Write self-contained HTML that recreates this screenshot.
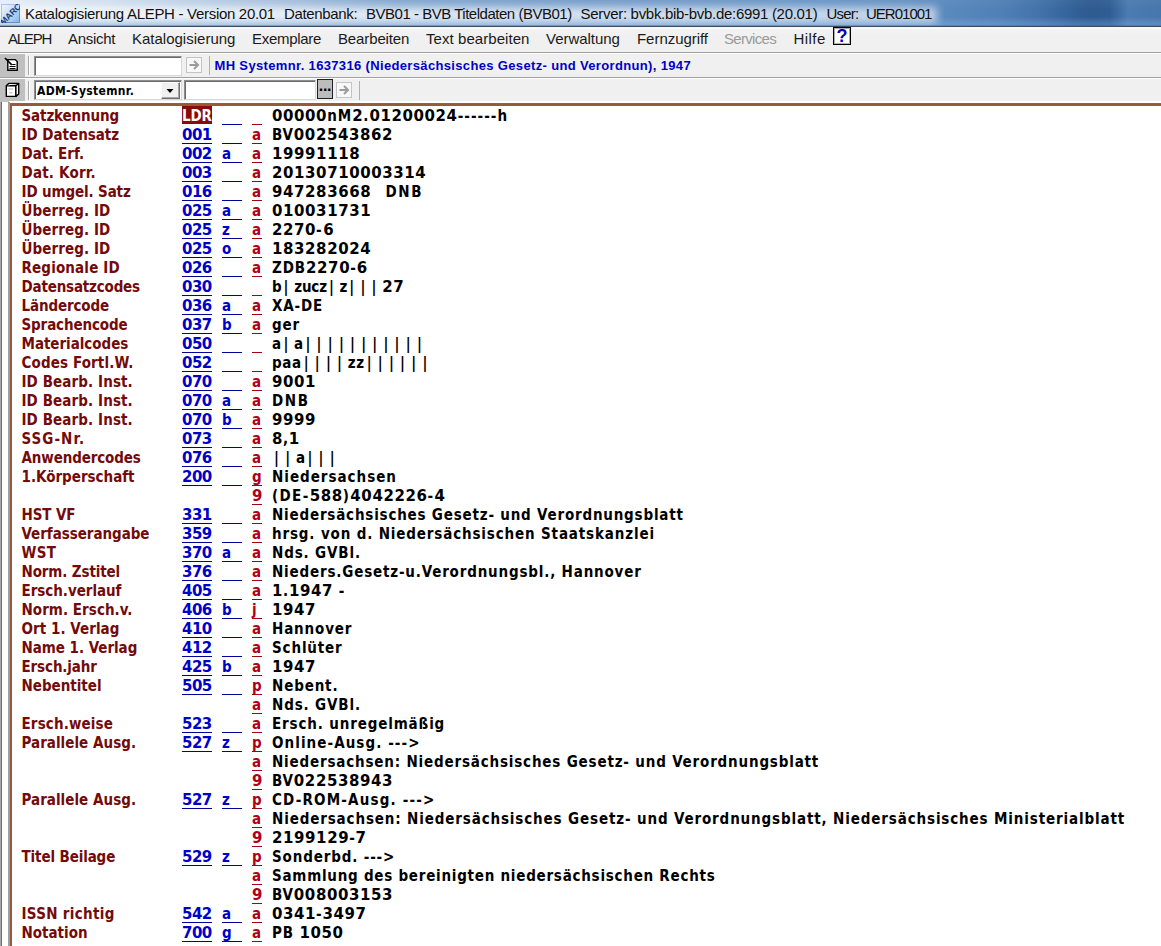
<!DOCTYPE html>
<html lang="de">
<head>
<meta charset="utf-8">
<title>Katalogisierung ALEPH</title>
<style>
html,body{margin:0;padding:0;}
body{width:1161px;height:946px;overflow:hidden;background:#fff;position:relative;font-family:"Liberation Sans",sans-serif;}
#title{position:absolute;left:0;top:0;width:1161px;height:27px;overflow:hidden;
 background:linear-gradient(90deg,#93b2d7 0px,#86a9d1 300px,#7099c8 600px,#6390c2 880px,#5b8abe 940px,#5080b6 1000px,#4272a9 1040px,#33639a 1070px,#2e5b90 1090px,#305e94 1110px,#4b7bb0 1128px,#4676ac 1161px);}
#title .shade{position:absolute;left:0;top:0;width:1161px;height:27px;background:linear-gradient(180deg,rgba(255,255,255,.04) 0,rgba(255,255,255,0) 10px,rgba(255,255,255,.0) 17px,rgba(160,200,245,.22) 23px,rgba(160,200,245,.22) 25px);}
#title .tl{position:absolute;left:0;top:0;width:420px;height:25px;background:linear-gradient(90deg,rgba(255,255,255,.75) 0,rgba(255,255,255,.55) 120px,rgba(255,255,255,0) 400px);-webkit-mask-image:linear-gradient(180deg,#000 0,#000 8px,rgba(0,0,0,.25) 19px,rgba(0,0,0,.1) 25px);mask-image:linear-gradient(180deg,#000 0,#000 8px,rgba(0,0,0,.25) 19px,rgba(0,0,0,.1) 25px);}
#title .glow{position:absolute;left:-30px;top:7px;width:967px;height:16px;background:linear-gradient(90deg,rgba(255,255,255,.85) 0,rgba(255,255,255,.8) 300px,rgba(255,255,255,.7) 700px,rgba(255,255,255,.62) 967px);filter:blur(4px);}
#title .bl{position:absolute;left:0;top:25px;width:1161px;height:2px;background:linear-gradient(180deg,rgba(70,95,130,.35) 0,rgba(70,95,130,.35) 1px,#3a4b62 1px,#3a4b62 2px);}
#title .tx{position:absolute;top:3.5px;height:19px;line-height:19px;font-size:15px;color:#101010;white-space:pre;}
#icon{position:absolute;left:1px;top:3.5px;width:19px;height:19px;overflow:hidden;}
#menu{position:absolute;left:0;top:27px;width:1161px;height:25px;background:linear-gradient(180deg,#fbfbfc 0,#f3f3f3 3px,#f0f0f0 8px);border-bottom:1px solid #a0a0a0;}
#menu span{position:absolute;top:1.5px;height:20px;line-height:20px;font-size:15px;color:#1a1a1a;white-space:pre;}
#menu span.dis{color:#9a9a9a;}
#tb1{position:absolute;left:0;top:53px;width:1161px;height:24px;background:#f0f0f0;border-bottom:1px solid #a0a0a0;box-shadow:inset 0 1px 0 #fff;}
#tb2{position:absolute;left:0;top:78px;width:1161px;height:25px;background:#f0f0f0;box-shadow:inset 0 1px 0 #fff;}
#tb2:after{content:"";position:absolute;left:9px;right:0;top:23px;height:2px;background:#fff;border-bottom:1px solid #75695e;}
.lp{position:absolute;left:0;top:1px;width:25px;bottom:0;background:#c0c0c0;}
.grip{position:absolute;left:28px;top:3px;width:1px;height:19px;background:#a8a8a8;border-right:1px solid #fff;}
.inp{position:absolute;background:#fff;border:1px solid #8e8e8e;border-right-color:#d8d8d8;border-bottom-color:#d8d8d8;box-shadow:inset 1px 1px 0 #6a6a6a;box-sizing:border-box;}
.abtn{position:absolute;width:16px;height:16px;box-sizing:border-box;border:1px solid #c4c4c4;background:#f8f8f8;}
.sep{position:absolute;width:1px;background:#b0b0b0;}
.ico{position:absolute;}
.abtn svg{display:block;}
.dd{position:absolute;left:161px;top:4px;width:19px;height:17px;box-sizing:border-box;background:#f0f0f0;border:1px solid #fff;border-right-color:#707070;border-bottom-color:#707070;box-shadow:inset -1px -1px 0 #a8a8a8;}
.dd svg{display:block;}
#pane{position:absolute;left:10px;top:104px;width:1160px;height:860px;border:2px solid #99583a;background:#fff;box-sizing:border-box;}
#ledge{position:absolute;left:0;top:102px;width:10px;height:844px;background:#fff;border-left:1px solid #a8a8a8;box-sizing:border-box;}
#ledge i{position:absolute;top:0;height:100%;display:block;}
#rows{position:absolute;left:0;top:106px;width:1161px;}
.r{position:relative;height:19px;line-height:19px;font:bold 15px/19px "DejaVu Sans Condensed","Liberation Sans",sans-serif;white-space:pre;}
.r span{position:absolute;top:0;height:19px;line-height:21px;white-space:pre;}
.l{left:21.5px;color:#740a0a;letter-spacing:-.13px;}
.t{left:182px;width:30px;color:#0000c8;box-sizing:border-box;border-bottom:1px solid #00009a;height:19px;letter-spacing:-.5px;font-family:"DejaVu Sans","Liberation Sans",sans-serif;}
.t.sel{background:#8b0a0a;color:#fff;border-bottom:0;height:18px!important;font-family:"DejaVu Sans Condensed","Liberation Sans",sans-serif;letter-spacing:-.2px;}
.i{left:222px;width:20px;color:#0000c8;border-bottom:1px solid #00009a;box-sizing:border-box;}
.s{left:252px;width:10px;color:#b00018;border-bottom:1px solid #a00010;box-sizing:border-box;}
.s.n{font-family:"DejaVu Sans","Liberation Sans",sans-serif;letter-spacing:-.5px;}
.c{left:272px;color:#000;letter-spacing:.85px;}
.c b{position:static;font-weight:bold;}
.c b.d{letter-spacing:.59px;font-family:"DejaVu Sans","Liberation Sans",sans-serif;}
.c b.p{letter-spacing:6.21px;margin-left:2.1px;margin-right:-.5px;}
</style>
</head>
<body>
<div id="title">
 <div class="shade"></div>
 <div class="glow"></div>
 <div class="tl"></div>
 <svg id="icon" viewBox="0 0 19 19"><defs><linearGradient id="ig" x1="0" y1="0" x2="1" y2="1"><stop offset="0" stop-color="#f4f8fd"/><stop offset=".5" stop-color="#c4dcf5"/><stop offset="1" stop-color="#7fb0e4"/></linearGradient></defs><rect x="0" y="0" width="19" height="19" fill="url(#ig)"/><rect x="0.5" y="0.5" width="18" height="18" fill="none" stroke="#a9c4e2"/><path d="M18.5 0.5v18h-18" fill="none" stroke="#6a8fbb"/><text x="9.5" y="13" font-family="Liberation Sans, sans-serif" font-weight="bold" font-size="8.6" fill="#173a80" text-anchor="middle" transform="rotate(-45 9.5 10)">MARC</text></svg>
 <span class="tx" style="left:25px;letter-spacing:-.3px">Katalogisierung ALEPH - Version 20.01</span>
 <span class="tx" style="left:284px;letter-spacing:-.35px">Datenbank:</span>
 <span class="tx" style="left:366px;letter-spacing:-.48px">BVB01 - BVB Titeldaten (BVB01)</span>
 <span class="tx" style="left:580.5px;letter-spacing:-.3px">Server: bvbk.bib-bvb.de:6991 (20.01)</span>
 <span class="tx" style="left:826.5px;letter-spacing:-.77px">User:</span>
 <span class="tx" style="left:866px;letter-spacing:-.99px">UER01001</span>
 <div class="bl"></div>
</div>
<div id="menu">
 <span style="left:8px;letter-spacing:-1.24px">ALEPH</span>
 <span style="left:68px;letter-spacing:-.31px">Ansicht</span>
 <span style="left:132px">Katalogisierung</span>
 <span style="left:252px;letter-spacing:-.3px">Exemplare</span>
 <span style="left:338px;letter-spacing:-.13px">Bearbeiten</span>
 <span style="left:426px;letter-spacing:.06px">Text bearbeiten</span>
 <span style="left:546px;letter-spacing:-.04px">Verwaltung</span>
 <span style="left:637px;letter-spacing:-.04px">Fernzugriff</span>
 <span class="dis" style="left:724px;letter-spacing:-.69px">Services</span>
 <span style="left:793.5px;letter-spacing:.45px">Hilfe</span>
 <span style="left:833px;top:0;width:18px;height:18px;box-sizing:border-box;border:1px solid #000;box-shadow:inset 0 0 0 1px #b0b0b0;background:#fff;color:#0000c0;font-weight:bold;font-size:18px;line-height:17px;text-align:center">?</span>
</div>
<div id="tb1">
 <div class="lp"></div>
 <div class="grip"></div>
 <svg class="ico" style="left:4px;top:4px" width="16" height="16" viewBox="0 0 16 16"><path d="M3.8 2.6h7.4l2 2v8.6h-9.4z" fill="#fff" stroke="#000" stroke-width="1.4"/><path d="M1 1l6.8 6.8" stroke="#000" stroke-width="1.7"/><path d="M8.2 7.5h3.3M5.5 9.5h6M5.5 11.5h6" stroke="#000" stroke-width="1"/></svg>
 <div class="inp" style="left:34px;top:3px;width:148px;height:20px"></div>
 <div class="abtn" style="left:186px;top:4px"><svg width="14" height="14" viewBox="0 0 14 14"><path d="M2.5 7h8.5M7 3l4 4l-4 4" fill="none" stroke="#9c9c9c" stroke-width="2"/></svg></div>
 <div class="sep" style="left:209px;top:3px;height:19px"></div>
 <span style="position:absolute;left:214.5px;top:5px;font:bold 13px/16px 'Liberation Sans',sans-serif;letter-spacing:.345px;color:#0000c8;white-space:pre">MH Systemnr. 1637316 (Niedersächsisches Gesetz- und Verordnun), 1947</span>
</div>
<div id="tb2">
 <div class="lp"></div>
 <div class="grip"></div>
 <svg class="ico" style="left:5px;top:4px" width="16" height="17" viewBox="0 0 16 17"><path d="M1.3 3.8h9.6v10.6h-9.6z" fill="#fff" stroke="#000" stroke-width="1.4" stroke-linejoin="round"/><path d="M1.3 3.8l2.4-2.4h10v10.6l-2.8 2.4v-10.6l2.8-2.4" fill="#fff" stroke="#000" stroke-width="1.4" stroke-linejoin="round"/><path d="M3.3 7h5M4 10.8h3.4" stroke="#b8b8b8" stroke-width="1"/></svg>
 <div class="inp" style="left:34px;top:2px;width:148px;height:20px"></div>
 <span style="position:absolute;left:37px;top:5px;font:bold 12px/16px 'DejaVu Sans Condensed','Liberation Sans',sans-serif;letter-spacing:.32px;color:#000;white-space:pre">ADM-Systemnr.</span>
 <div class="dd"><svg width="16" height="15" viewBox="0 0 16 15"><path d="M4.5 6h7l-3.5 4z" fill="#000"/></svg></div>
 <div class="inp" style="left:184px;top:2px;width:132px;height:20px"></div>
 <div style="position:absolute;left:317px;top:1px;width:16px;height:20px;box-sizing:border-box;background:#bcbcbc;border:1px solid #202020;font:bold 16px/11px 'Liberation Sans',sans-serif;text-align:center;letter-spacing:-.3px">...</div>
 <div class="abtn" style="left:336px;top:4px"><svg width="14" height="14" viewBox="0 0 14 14"><path d="M2.5 7h8.5M7 3l4 4l-4 4" fill="none" stroke="#9c9c9c" stroke-width="2"/></svg></div>
 <div class="sep" style="left:359px;top:3px;height:19px"></div>
</div>
<div id="ledge"><i style="left:0;width:1px;background:#6e6e6e"></i><i style="left:7px;width:2px;background:#a0a0a0"></i></div>
<div id="pane"></div>
<div id="rows">
<div class="r"><span class="l">Satzkennung</span><span class="t sel">LDR</span><span class="i">  </span><span class="s e"> </span><span class="c" style="letter-spacing:1.02px"><b class="d">00000</b>nM<b class="d">2</b>.<b class="d">01200024</b>------h</span></div>
<div class="r"><span class="l" style="letter-spacing:-0.03px">ID Datensatz</span><span class="t">001</span><span class="i">  </span><span class="s">a</span><span class="c">BV<b class="d">002543862</b></span></div>
<div class="r"><span class="l" style="letter-spacing:-0.01px">Dat. Erf.</span><span class="t">002</span><span class="i">a </span><span class="s">a</span><span class="c"><b class="d">19991118</b></span></div>
<div class="r"><span class="l" style="letter-spacing:0.2px">Dat. Korr.</span><span class="t">003</span><span class="i">  </span><span class="s">a</span><span class="c"><b class="d">20130710003314</b></span></div>
<div class="r"><span class="l">ID umgel. Satz</span><span class="t">016</span><span class="i">  </span><span class="s">a</span><span class="c" style="word-spacing:0.7px;letter-spacing:1.7px"><b class="d">947283668</b>  DNB</span></div>
<div class="r"><span class="l" style="letter-spacing:0.08px">Überreg. ID</span><span class="t">025</span><span class="i">a </span><span class="s">a</span><span class="c"><b class="d">010031731</b></span></div>
<div class="r"><span class="l" style="letter-spacing:0.08px">Überreg. ID</span><span class="t">025</span><span class="i">z </span><span class="s">a</span><span class="c" style="letter-spacing:1.62px"><b class="d">2270</b>-<b class="d">6</b></span></div>
<div class="r"><span class="l" style="letter-spacing:0.08px">Überreg. ID</span><span class="t">025</span><span class="i">o </span><span class="s">a</span><span class="c"><b class="d">183282024</b></span></div>
<div class="r"><span class="l" style="letter-spacing:0.15px">Regionale ID</span><span class="t">026</span><span class="i">  </span><span class="s">a</span><span class="c" style="letter-spacing:0.92px">ZDB<b class="d">2270</b>-<b class="d">6</b></span></div>
<div class="r"><span class="l" style="letter-spacing:-0.19px">Datensatzcodes</span><span class="t">030</span><span class="i">  </span><span class="s e"> </span><span class="c" style="letter-spacing:-0.18px">b<b class="p">|</b>zucz<b class="p">|</b>z<b class="p">|||</b><b class="d">27</b></span></div>
<div class="r"><span class="l">Ländercode</span><span class="t">036</span><span class="i">a </span><span class="s">a</span><span class="c">XA-DE</span></div>
<div class="r"><span class="l">Sprachencode</span><span class="t">037</span><span class="i">b </span><span class="s">a</span><span class="c">ger</span></div>
<div class="r"><span class="l" style="letter-spacing:-0.04px">Materialcodes</span><span class="t">050</span><span class="i">  </span><span class="s e"> </span><span class="c" style="letter-spacing:0.22px">a<b class="p">|</b>a<b class="p">|||||||||||</b></span></div>
<div class="r"><span class="l" style="letter-spacing:0.12px">Codes Fortl.W.</span><span class="t">052</span><span class="i">  </span><span class="s e"> </span><span class="c" style="letter-spacing:0.57px">paa<b class="p">||||</b>zz<b class="p">||||||</b></span></div>
<div class="r"><span class="l" style="letter-spacing:0.1px">ID Bearb. Inst.</span><span class="t">070</span><span class="i">  </span><span class="s">a</span><span class="c"><b class="d">9001</b></span></div>
<div class="r"><span class="l" style="letter-spacing:0.1px">ID Bearb. Inst.</span><span class="t">070</span><span class="i">a </span><span class="s">a</span><span class="c" style="letter-spacing:1.62px">DNB</span></div>
<div class="r"><span class="l" style="letter-spacing:0.1px">ID Bearb. Inst.</span><span class="t">070</span><span class="i">b </span><span class="s">a</span><span class="c"><b class="d">9999</b></span></div>
<div class="r"><span class="l" style="letter-spacing:1.04px">SSG-Nr.</span><span class="t">073</span><span class="i">  </span><span class="s">a</span><span class="c" style="letter-spacing:0.5px"><b class="d">8</b>,<b class="d">1</b></span></div>
<div class="r"><span class="l">Anwendercodes</span><span class="t">076</span><span class="i">  </span><span class="s">a</span><span class="c" style="letter-spacing:0.4px"><b class="p">||</b>a<b class="p">|||</b></span></div>
<div class="r"><span class="l" style="letter-spacing:-0.01px">1.Körperschaft</span><span class="t">200</span><span class="i">  </span><span class="s">g</span><span class="c" style="letter-spacing:0.99px">Niedersachsen</span></div>
<div class="r"><span class="s n">9</span><span class="c" style="letter-spacing:1.37px">(DE-<b class="d">588</b>)<b class="d">4042226</b>-<b class="d">4</b></span></div>
<div class="r"><span class="l">HST VF</span><span class="t">331</span><span class="i">  </span><span class="s">a</span><span class="c" style="letter-spacing:0.8px">Niedersächsisches Gesetz- und Verordnungsblatt</span></div>
<div class="r"><span class="l" style="letter-spacing:-0.04px">Verfasserangabe</span><span class="t">359</span><span class="i">  </span><span class="s">a</span><span class="c">hrsg. von d. Niedersächsischen Staatskanzlei</span></div>
<div class="r"><span class="l" style="letter-spacing:0.32px">WST</span><span class="t">370</span><span class="i">a </span><span class="s">a</span><span class="c">Nds. GVBl.</span></div>
<div class="r"><span class="l">Norm. Zstitel</span><span class="t">376</span><span class="i">  </span><span class="s">a</span><span class="c" style="letter-spacing:0.82px">Nieders.Gesetz-u.Verordnungsbl., Hannover</span></div>
<div class="r"><span class="l" style="letter-spacing:-0.04px">Ersch.verlauf</span><span class="t">405</span><span class="i">  </span><span class="s">a</span><span class="c"><b class="d">1</b>.<b class="d">1947</b> -</span></div>
<div class="r"><span class="l" style="letter-spacing:0.04px">Norm. Ersch.v.</span><span class="t">406</span><span class="i">b </span><span class="s">j</span><span class="c"><b class="d">1947</b></span></div>
<div class="r"><span class="l" style="letter-spacing:0.05px">Ort 1. Verlag</span><span class="t">410</span><span class="i">  </span><span class="s">a</span><span class="c">Hannover</span></div>
<div class="r"><span class="l" style="letter-spacing:-0.04px">Name 1. Verlag</span><span class="t">412</span><span class="i">  </span><span class="s">a</span><span class="c">Schlüter</span></div>
<div class="r"><span class="l">Ersch.jahr</span><span class="t">425</span><span class="i">b </span><span class="s">a</span><span class="c"><b class="d">1947</b></span></div>
<div class="r"><span class="l" style="letter-spacing:-0.02px">Nebentitel</span><span class="t">505</span><span class="i">  </span><span class="s">p</span><span class="c">Nebent.</span></div>
<div class="r"><span class="s">a</span><span class="c">Nds. GVBl.</span></div>
<div class="r"><span class="l" style="letter-spacing:0.13px">Ersch.weise</span><span class="t">523</span><span class="i">  </span><span class="s">a</span><span class="c">Ersch. unregelmäßig</span></div>
<div class="r"><span class="l" style="letter-spacing:0.03px">Parallele Ausg.</span><span class="t">527</span><span class="i">z </span><span class="s">p</span><span class="c" style="letter-spacing:1.07px">Online-Ausg. ---&gt;</span></div>
<div class="r"><span class="s">a</span><span class="c" style="letter-spacing:0.82px">Niedersachsen: Niedersächsisches Gesetz- und Verordnungsblatt</span></div>
<div class="r"><span class="s n">9</span><span class="c">BV<b class="d">022538943</b></span></div>
<div class="r"><span class="l" style="letter-spacing:0.03px">Parallele Ausg.</span><span class="t">527</span><span class="i">z </span><span class="s">p</span><span class="c" style="letter-spacing:1.17px">CD-ROM-Ausg. ---&gt;</span></div>
<div class="r"><span class="s">a</span><span class="c" style="letter-spacing:0.86px">Niedersachsen: Niedersächsisches Gesetz- und Verordnungsblatt, Niedersächsisches Ministerialblatt</span></div>
<div class="r"><span class="s n">9</span><span class="c" style="letter-spacing:0.72px"><b class="d">2199129</b>-<b class="d">7</b></span></div>
<div class="r"><span class="l">Titel Beilage</span><span class="t">529</span><span class="i">z </span><span class="s">p</span><span class="c">Sonderbd. ---&gt;</span></div>
<div class="r"><span class="s">a</span><span class="c" style="letter-spacing:0.75px">Sammlung des bereinigten niedersächsischen Rechts</span></div>
<div class="r"><span class="s n">9</span><span class="c">BV<b class="d">008003153</b></span></div>
<div class="r"><span class="l" style="letter-spacing:0.32px">ISSN richtig</span><span class="t">542</span><span class="i">a </span><span class="s">a</span><span class="c" style="letter-spacing:0.72px"><b class="d">0341</b>-<b class="d">3497</b></span></div>
<div class="r"><span class="l" style="letter-spacing:0.0px">Notation</span><span class="t">700</span><span class="i">g </span><span class="s">a</span><span class="c">PB <b class="d">1050</b></span></div>
</div>
</body>
</html>
